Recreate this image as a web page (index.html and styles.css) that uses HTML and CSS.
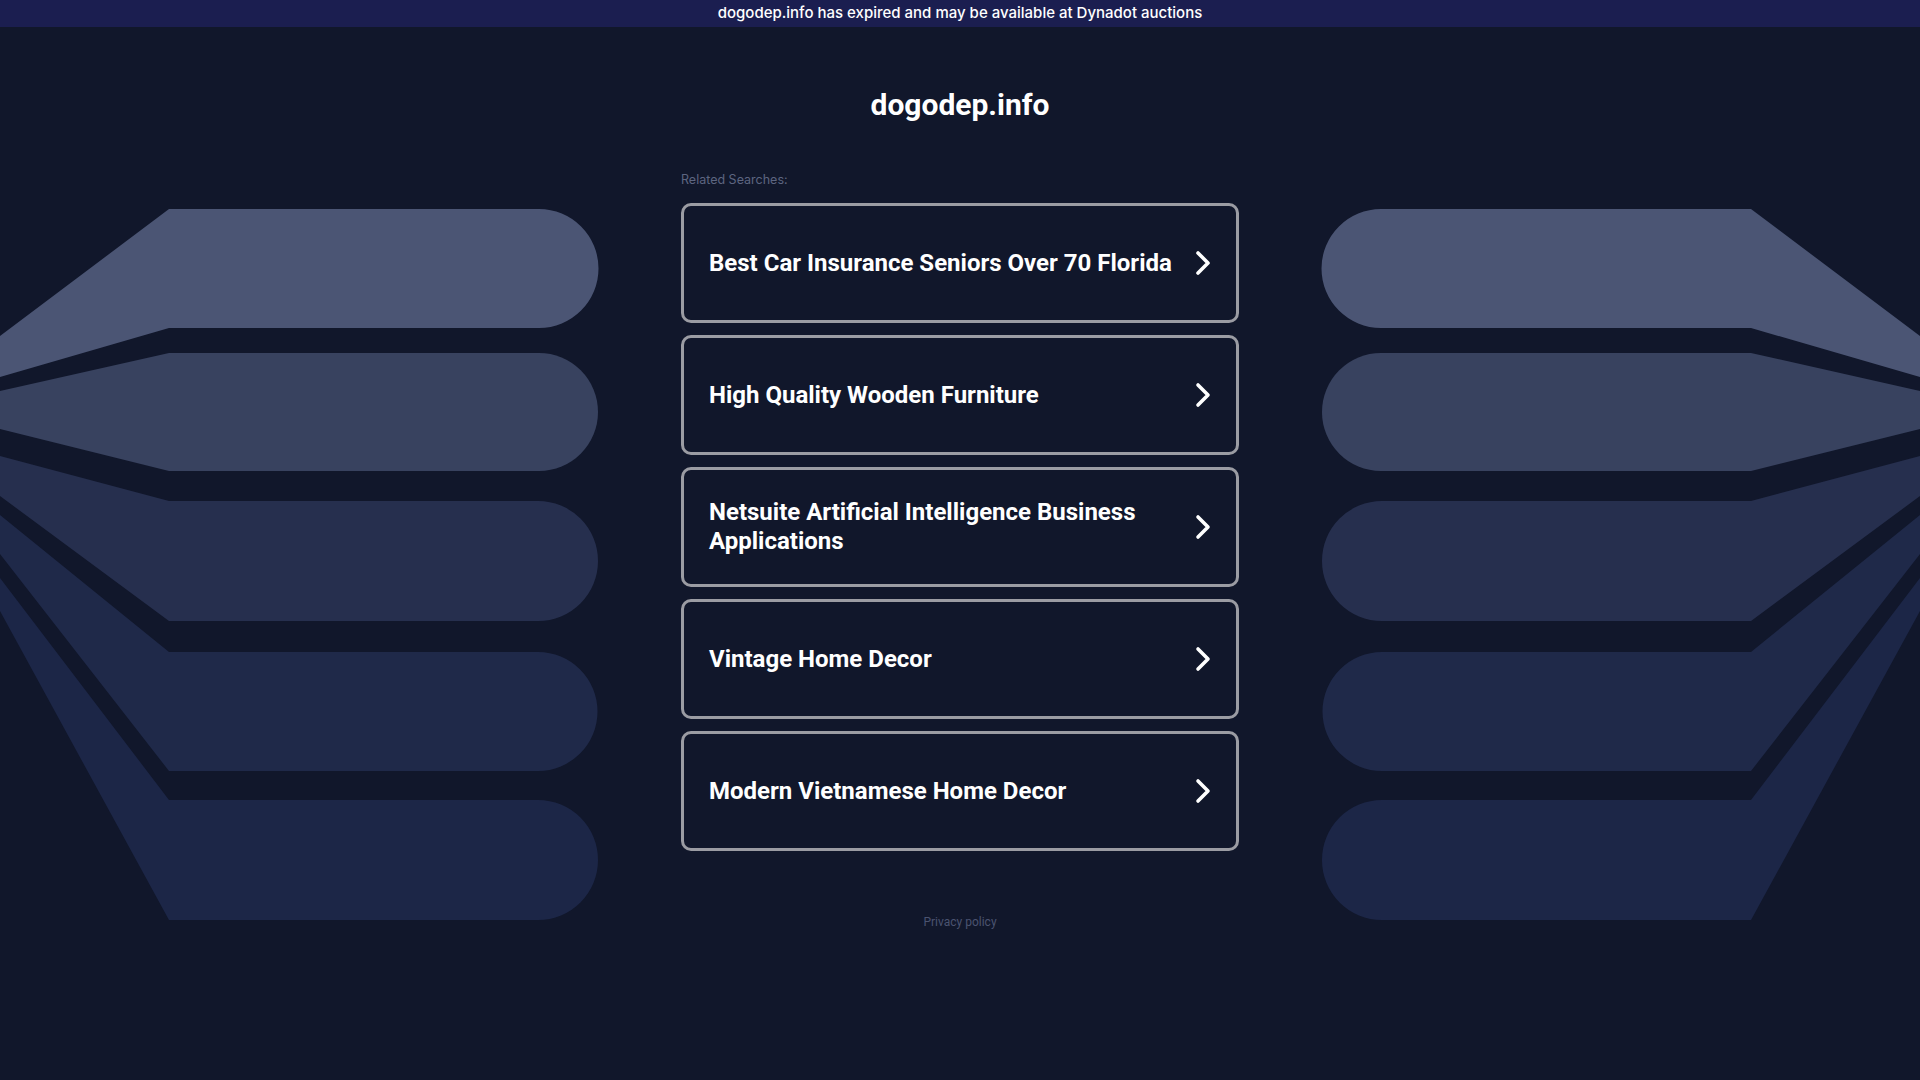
FILE: index.html
```html
<html>
<head>
  <link rel="stylesheet" href="styles.css">
</head>
<body>

<svg class="backdrop" viewBox="0 0 1920 1080" preserveAspectRatio="none" aria-hidden="true">
  <g id="fan">
    <path fill="#1c2647" d="M0 578 L169 800 H538 A60 60 0 0 1 538 920 H169 L0 611 Z"/>
    <path fill="#1f2949" d="M0 515 L169 652 H538 A59.5 59.5 0 0 1 538 771 H169 L0 554 Z"/>
    <path fill="#262f4e" d="M0 456 L169 501 H538 A60 60 0 0 1 538 621 H169 L0 496 Z"/>
    <path fill="#38425f" d="M0 391 L169 353 H539 A59 59 0 0 1 539 471 H169 L0 429 Z"/>
    <path fill="#4b5574" d="M0 336 L169 209 H539 A59.5 59.5 0 0 1 539 328 H169 L0 377 Z"/>
  </g>
  <use href="#fan" transform="translate(1920 0) scale(-1 1)"/>
</svg>

<div class="topbar">dogodep.info has expired and may be available at Dynadot auctions</div>

<div id="content">
  <h1 class="domain">dogodep.info</h1>

  <div class="related">Related Searches:</div>

  <div class="results">
    <a class="result" href="#">
      <span class="label">Best Car Insurance Seniors Over 70 Florida</span>
      <svg class="chev" viewBox="0 0 16 26"><path d="M3 3 L13 13 L3 23"/></svg>
    </a>
    <a class="result" href="#">
      <span class="label">High Quality Wooden Furniture</span>
      <svg class="chev" viewBox="0 0 16 26"><path d="M3 3 L13 13 L3 23"/></svg>
    </a>
    <a class="result" href="#">
      <span class="label">Netsuite Artificial Intelligence Business Applications</span>
      <svg class="chev" viewBox="0 0 16 26"><path d="M3 3 L13 13 L3 23"/></svg>
    </a>
    <a class="result" href="#">
      <span class="label">Vintage Home Decor</span>
      <svg class="chev" viewBox="0 0 16 26"><path d="M3 3 L13 13 L3 23"/></svg>
    </a>
    <a class="result" href="#">
      <span class="label">Modern Vietnamese Home Decor</span>
      <svg class="chev" viewBox="0 0 16 26"><path d="M3 3 L13 13 L3 23"/></svg>
    </a>
  </div>

  <div class="privacy"><a href="#">Privacy policy</a></div>
</div>

</body>
</html>
```

FILE: styles.css
```css
body {
  margin: 0;
  background-color: #11172b;
  color: #fff;
  font-family: Roboto, "Liberation Sans", sans-serif;
  min-height: 1080px;
}
.backdrop {
  position: absolute;
  top: 0;
  left: 0;
  width: 1920px;
  height: 1080px;
  z-index: 0;
}
.topbar {
  position: relative;
  z-index: 1;
  height: 27px;
  line-height: 26px;
  background-color: #1b1e50;
  text-align: center;
  font-family: Inter, "Open Sans", sans-serif;
  font-weight: 500;
  font-size: 15px;
}
#content {
  position: relative;
  z-index: 1;
  width: 558px;
  margin: 0 auto;
}
.domain {
  margin: 61px 0 0 0;
  font-size: 30px;
  line-height: 34px;
  font-weight: 700;
  text-align: center;
}
.related {
  margin-top: 50px;
  font-family: Inter, "Open Sans", sans-serif;
  font-size: 12.5px;
  line-height: 16px;
  color: #5d6580;
}
.results {
  margin-top: 15px;
  display: flex;
  flex-direction: column;
  gap: 12px;
}
.result {
  box-sizing: border-box;
  height: 120px;
  border: 3px solid #9b9ca3;
  border-radius: 10px;
  padding: 0 25px 0 25px;
  display: flex;
  align-items: center;
  justify-content: space-between;
  gap: 10px;
  color: #fff;
  text-decoration: none;
}
.label {
  font-size: 24px;
  line-height: 29px;
  font-weight: 700;
}
.chev {
  flex: none;
  width: 16px;
  height: 26px;
}
.chev path {
  fill: none;
  stroke: #fff;
  stroke-width: 3.6;
  stroke-linecap: round;
  stroke-linejoin: round;
}
.privacy {
  margin-top: 63px;
  text-align: center;
  font-size: 12px;
  line-height: 16px;
}
.privacy a {
  color: #4b5370;
  text-decoration: none;
}
```
